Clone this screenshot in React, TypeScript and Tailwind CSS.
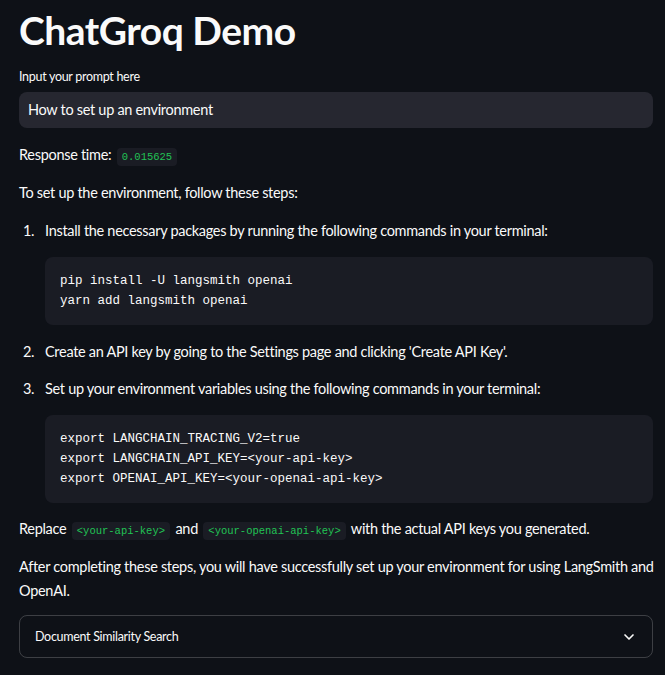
import React from "react";
import { ChevronDown } from "lucide-react";

const sans = "font-['Lato','Noto_Sans',sans-serif]";
const mono = "font-['Liberation_Mono','DejaVu_Sans_Mono',monospace]";

const InlineCode = ({ children }: { children: React.ReactNode }) => (
    <code className={`${mono} text-[10.5px] tracking-normal text-[#21c354] bg-[#1a1c24] rounded px-[5px] py-[3px] mx-[2px]`}>
        {children}
    </code>
);

const CodeBlock = ({ lines }: { lines: string[] }) => (
    <pre className={`${mono} text-[12.5px] leading-[20px] tracking-normal text-[#fafafa] bg-[#1a1c24] rounded-lg px-[15px] py-[14px] my-[14px]`}>
        {lines.map((l, i) => (
            <div key={i}>{l}</div>
        ))}
    </pre>
);

export default function App() {
    return (
        <div className={`${sans} min-h-[675px] w-full bg-[#0e1117] text-[#fafafa] text-[14.5px] leading-[24px] tracking-[-0.3px] pl-[19px] pr-[12px] pt-[8px] overflow-hidden`}>
            <h1 className="text-[39px] leading-[44px] font-bold tracking-[-0.5px]">ChatGroq Demo</h1>

            {/* Input */}
            <div className="mt-[17px]">
                <label className="block text-[12.5px] leading-[16px] mb-[7px]">Input your prompt here</label>
                <div className="h-[36px] bg-[#262730] rounded-lg flex items-center px-[9px]">
                    How to set up an environment
                </div>
            </div>

            <p className="mt-[15px]">
                Response time: <InlineCode>0.015625</InlineCode>
            </p>

            <p className="mt-[12px]">To set up the environment, follow these steps:</p>

            <ol className="mt-[14px]">
                <li className="flex">
                    <span className="w-[26px] pl-[4px] shrink-0">1.</span>
                    <div className="flex-1">
                        <p>Install the necessary packages by running the following commands in your terminal:</p>
                        <CodeBlock lines={["pip install -U langsmith openai", "yarn add langsmith openai"]} />
                    </div>
                </li>
                <li className="flex mt-[1px]">
                    <span className="w-[26px] pl-[4px] shrink-0">2.</span>
                    <p className="flex-1">Create an API key by going to the Settings page and clicking 'Create API Key'.</p>
                </li>
                <li className="flex mt-[13px]">
                    <span className="w-[26px] pl-[4px] shrink-0">3.</span>
                    <div className="flex-1">
                        <p>Set up your environment variables using the following commands in your terminal:</p>
                        <CodeBlock
                            lines={[
                                "export LANGCHAIN_TRACING_V2=true",
                                "export LANGCHAIN_API_KEY=<your-api-key>",
                                "export OPENAI_API_KEY=<your-openai-api-key>",
                            ]}
                        />
                    </div>
                </li>
            </ol>

            <p>
                Replace <InlineCode>{"<your-api-key>"}</InlineCode> and <InlineCode>{"<your-openai-api-key>"}</InlineCode> with the actual API keys you generated.
            </p>

            <p className="mt-[12px]">
                <span className="whitespace-nowrap">
                    After completing these steps, you will have successfully set up your environment for using LangSmith and
                </span>
                <br />
                OpenAI.
            </p>

            {/* Expander */}
            <div className="mt-[12px] h-[43px] border border-[#fafafa]/20 rounded-lg flex items-center justify-between px-[15px]">
                <span className="text-[12.5px]">Document Similarity Search</span>
                <ChevronDown className="w-4 h-4" strokeWidth={2.5} />
            </div>
        </div>
    );
}
